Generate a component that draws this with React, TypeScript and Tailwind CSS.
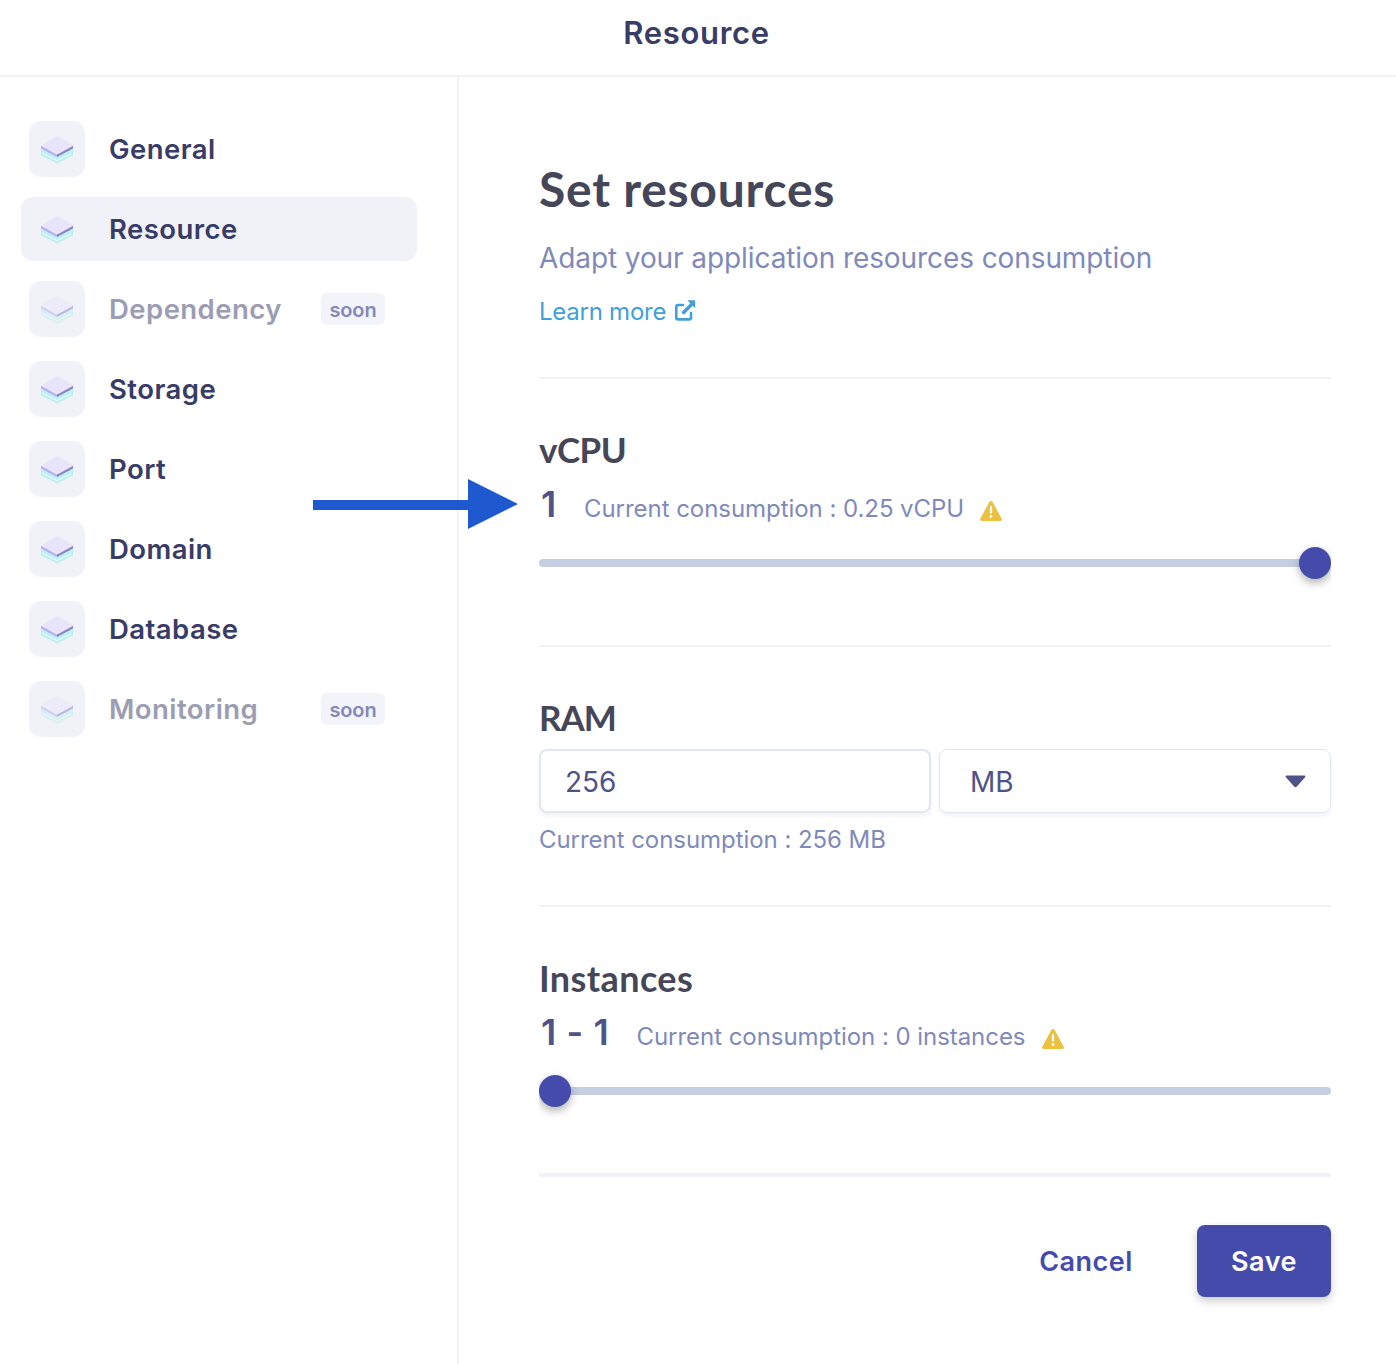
type Item = { label: string; active?: boolean; soon?: boolean };

const items: Item[] = [
  { label: "General" },
  { label: "Resource", active: true },
  { label: "Dependency", soon: true },
  { label: "Storage" },
  { label: "Port" },
  { label: "Domain" },
  { label: "Database" },
  { label: "Monitoring", soon: true },
];

function LayersIcon({ faded }: { faded?: boolean }) {
  return (
    <svg width="32" height="28" viewBox="0 0 32 28" className={faded ? "mt-0.5 opacity-50" : "mt-0.5"}>
      <path d="M0.300 12 16 20l15.700-8v6.600L16 26.800.300 18.600Z" fill="#bdf0f0" />
      <path d="M1.500 17.300 16 24.800l14.500-7.500" fill="none" stroke="#f4fbfd" strokeWidth="1" />
      <path d="M0.400 14.500v4.300L16 27.200l15.600-8.400v-4.300" fill="none" stroke="#a5ebe8" strokeWidth="0.700" />
      <path d="M0 9.500v3l14.600 7.800q1.400.6 1.400.6V17Z" fill="#b4aeee" />
      <path d="M32 9.500v3l-14.600 7.800q-1.400.6-1.400.6V17Z" fill="#8b82c3" />
      <path d="M14.600.6Q16-.1 17.400.6L31.300 8.700q1.300.8 0 1.500l-13.900 7.900q-1.400.7-2.800 0L.7 10.200q-1.300-.7 0-1.500Z" fill="#e8e5fa" />
    </svg>
  );
}

function WarningIcon({ className }: { className: string }) {
  return (
    <svg width="22" height="20" viewBox="0 0 22 20" className={className}>
      <path d="M9.300 1.100q1.700-2.200 3.400 0l8.900 16.400q.9 2-1.200 2.500H1.600q-2.100-.5-1.200-2.500Z" fill="#ecc142" />
      <path d="M11 6v5.600" stroke="#fff" strokeWidth="2.200" strokeLinecap="round" />
      <circle cx="11" cy="15.500" r="1.400" fill="#fff" />
    </svg>
  );
}

function ExternalIcon() {
  return (
    <svg width="21" height="21" viewBox="0 0 21 21" className="relative -top-0.5 text-[#419fdb]">
      <path d="M8 5H3.200Q1.300 5 1.300 6.900v10.600q0 1.900 1.900 1.900h10.900q1.900 0 1.900-1.900V13" fill="none" stroke="currentColor" strokeWidth="2.600" strokeLinecap="round" />
      <path d="M8.600 12.400 17 4" stroke="currentColor" strokeWidth="3.600" strokeLinecap="round" />
      <path d="M12.300 .2h7q.9 0 .9.9v7.200Z" fill="currentColor" />
    </svg>
  );
}

function Slider({ end }: { end?: boolean }) {
  return (
    <div className={`mt-[19px] grid h-8 items-center [clip-path:inset(-16px_0)] ${end ? "justify-items-end" : "justify-items-start"}`}>
      <div className="col-start-1 row-start-1 h-2 w-full rounded-full bg-[#c6cee3]" />
      <div className="z-10 col-start-1 row-start-1 size-8 rounded-full bg-[#454bab] shadow-[0_4px_8px_rgba(0,0,0,0.3)]" />
    </div>
  );
}

const heading = "mt-[46px] h-12 font-['Lato',sans-serif] font-bold text-[#464659]";
const muted = "text-2xl/[32px] tracking-[-0.05px] text-[#7f8aba]";

export default function App() {
  return (
    <div className="flex h-[1364px] w-[1396px] flex-col overflow-hidden bg-white font-['Inter',sans-serif] whitespace-nowrap [font-feature-settings:'calt'_0]">
      <header className="flex h-[77px] shrink-0 justify-center border-b-2 border-[#f1f2f8]">
        <h1 className="mt-[9px] mr-[3px] text-[31px]/[48px] font-semibold tracking-[0.65px] text-[#383c66]">Resource</h1>
      </header>
      <div className="flex grow">
        <aside className="relative w-[459px] shrink-0 border-r-2 border-[#f1f2f8] pt-10 pr-10 pl-[21px]">
          <nav className="flex flex-col gap-4">
            {items.map((it) => (
              <div key={it.label} className={`flex h-16 items-center rounded-xl pr-8 pl-2 ${it.active ? "bg-[#f1f2f8]" : ""}`}>
                <div className="flex size-14 items-center justify-center rounded-xl bg-[#f1f2f8]">
                  <LayersIcon faded={it.soon} />
                </div>
                <span className={`ml-6 text-[27.5px]/[40px] font-semibold tracking-[0.45px] ${it.soon ? "text-[#9c9db3]" : "text-[#383c66]"}`}>{it.label}</span>
                {it.soon && <span className="ml-auto flex h-8 w-16 items-center justify-center rounded-md bg-[#f3f4fa] pt-0.5 text-xl font-semibold tracking-[-0.1px] text-[#8688b8]">soon</span>}
              </div>
            ))}
          </nav>
          <svg width="205" height="50" viewBox="0 0 205 50" className="absolute top-[402px] left-[313px] z-10">
            <path d="M0 21h155V0l50 25-50 25V31H0Z" fill="#1f59cf" />
          </svg>
        </aside>
        <main className="ml-20 w-[792px] pt-[78px]">
          <h2 className="h-16 pt-0.5 font-['Lato',sans-serif] text-5xl/[64px] font-bold tracking-[0.75px] text-[#464659]">Set resources</h2>
          <p className="mt-[18px] h-10 pt-px text-[28px]/[40px] tracking-[-0.09px] text-[#7f8aba]">Adapt your application resources consumption</p>
          <a className="mt-[18px] flex h-8 items-center gap-[9px] pt-0.5 text-2xl/[32px] tracking-[-0.25px] text-[#419fdb]">
            Learn more
            <ExternalIcon />
          </a>
          <hr className="mt-[50px] border-t-2 border-[#f1f2f8]" />

          <h3 className={`${heading} text-[35px]/[48px] tracking-[-0.5px]`}>vCPU</h3>
          <div className="mt-[7px] flex h-12 items-baseline">
            <span className="w-[45px] pl-0.5 text-4xl/[48px] font-semibold text-[#4e5488]">1</span>
            <span className={muted}>Current consumption : 0.25 vCPU</span>
            <WarningIcon className="relative top-1 ml-4" />
          </div>
          <Slider end />
          <hr className="mt-[66px] border-t-2 border-[#f1f2f8]" />

          <h3 className={`${heading} text-[35px]/[48px] tracking-[-1px]`}>RAM</h3>
          <div className="mt-2 grid grid-cols-2 gap-2 text-[28px] text-[#4e5488]">
            <div className="flex h-16 items-center rounded-lg border-2 border-[#e2e5f2] pt-px pl-6 shadow-[0_3px_4px_rgba(0,0,0,0.05)]">256</div>
            <div className="flex h-16 items-center justify-between rounded-lg border border-[#e2e5f2] pr-6 pl-[30px] shadow-[0_3px_4px_rgba(0,0,0,0.05)]">
              <span className="pt-px">MB</span>
              <svg width="21" height="13" viewBox="0 0 21 13">
                <path d="M1.800.5h17.400q2 .3.700 2l-8 9q-1.400 1.300-2.800 0l-8-9q-1.300-1.700.7-2Z" fill="#4e5488" />
              </svg>
            </div>
          </div>
          <p className={`mt-[11px] h-[31px] ${muted}`}>Current consumption : 256 MB</p>
          <hr className="mt-[50px] border-t-2 border-[#f1f2f8]" />

          <h3 className={`${heading} pt-px text-4xl/[48px] tracking-[0.4px]`}>Instances</h3>
          <div className="mt-[7px] flex h-12 items-baseline">
            <span className="w-[97.5px] pl-0.5 text-4xl/[48px] font-semibold tracking-[0.6px] text-[#4e5488]">1 - 1</span>
            <span className={muted}>Current consumption : 0 instances</span>
            <WarningIcon className="relative top-1 ml-[17px]" />
          </div>
          <Slider />
          <hr className="mt-[66px] border-t-4 border-[#f1f2f8]" />

          <div className="mt-12 flex justify-end text-[27px] font-semibold tracking-[0.5px]">
            <button className="h-[72px] w-[158px] pt-0.5 text-center text-[#454bab]">Cancel</button>
            <button className="ml-8 h-[72px] w-[134px] rounded-lg bg-[#454bab] pt-0.5 text-white shadow-[0_4px_8px_rgba(0,0,0,0.2)]">Save</button>
          </div>
        </main>
      </div>
    </div>
  );
}
